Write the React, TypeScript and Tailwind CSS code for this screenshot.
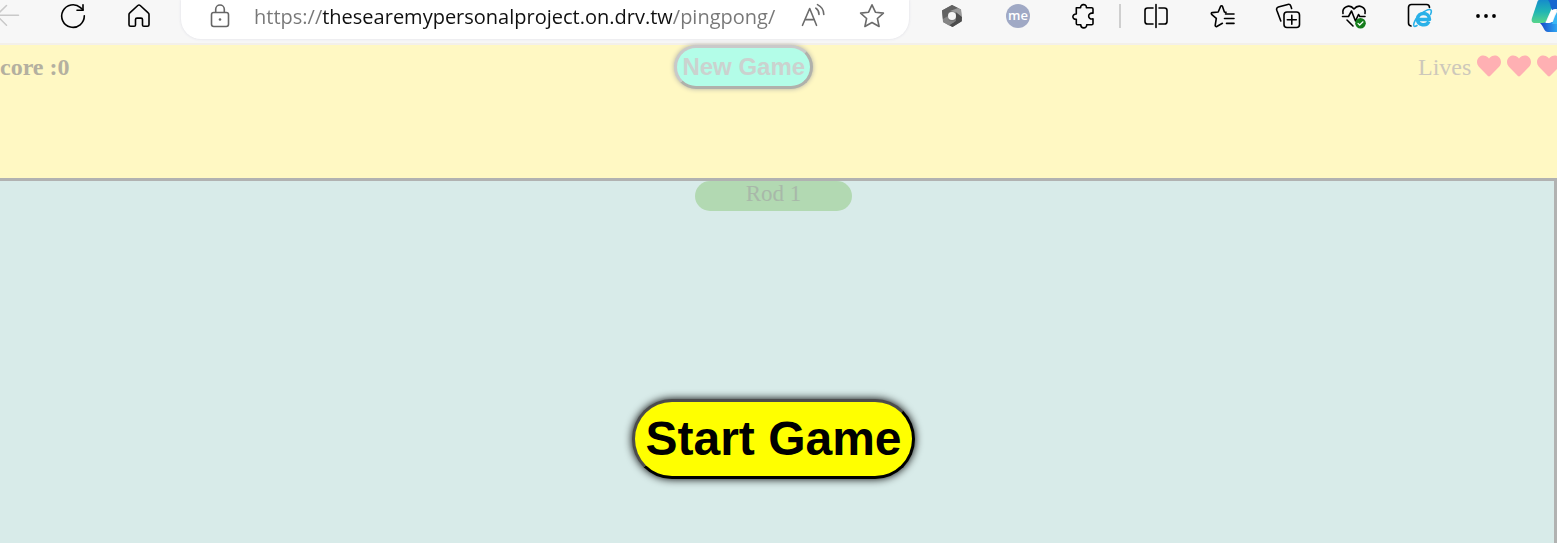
import React from "react";

type IconProps = { children: React.ReactNode; className?: string };

function Icon({ children, className = "text-black" }: IconProps) {
  return (
    <svg
      viewBox="0 0 26 26"
      width="26"
      height="26"
      fill="none"
      stroke="currentColor"
      strokeWidth="1.6"
      strokeLinecap="round"
      strokeLinejoin="round"
      className={`shrink-0 ${className}`}
      aria-hidden="true"
    >
      {children}
    </svg>
  );
}

function ToolButton({ label, children }: { label: string; children: React.ReactNode }) {
  return (
    <button type="button" aria-label={label} className="flex h-8 w-[66px] shrink-0 items-center justify-center">
      {children}
    </button>
  );
}

function Heart() {
  return (
    <svg viewBox="0 0 512 512" width="24" height="24" className="mt-px shrink-0 text-[#ffb0b3]" fill="currentColor" aria-hidden="true">
      <path d="M462.3 62.6C407.5 15.9 326 24.3 275.7 76.2L256 96.5l-19.7-20.3C186.1 24.3 104.500 15.900 49.700 62.600c-62.800 53.600-66.100 149.800-9.900 207.900l193.500 199.800c12.500 12.900 32.800 12.900 45.300 0l193.500-199.800c56.300-58.100 53-154.300-9.800-207.900z" />
    </svg>
  );
}

function BrowserBar() {
  return (
    <header className="flex h-[45px] shrink-0 items-start overflow-hidden border-b-2 border-[#f3f0ea] bg-[#f7f7f7]">
      <button type="button" aria-label="Back" className="flex h-8 w-10 shrink-0 items-center">
        <svg viewBox="0 0 20 26" width="20" height="26" fill="none" stroke="#c9c9c9" strokeWidth="1.5" strokeLinecap="round" aria-hidden="true">
          <path d="M18.500 12.300H-4M6.500 2.500-3.500 12.300l10 10" />
        </svg>
      </button>
      <ToolButton label="Refresh">
        <Icon>
          <path d="M24.300 12.800A11.300 11.300 0 1 1 20.500 4.600L23 7" />
          <path d="M23 1.700V7.300H17" />
        </Icon>
      </ToolButton>
      <ToolButton label="Home">
        <Icon>
          <path d="M3 11.500c0-.7.300-1.300.8-1.700l8-7.300c.7-.6 1.700-.6 2.400 0l8 7.300c.5.400.8 1 .8 1.700v10.200c0 .9-.7 1.600-1.600 1.600h-3.600c-.8 0-1.300-.6-1.300-1.300v-5.400c0-.8-.7-1.500-1.500-1.500h-4c-.8 0-1.500.7-1.500 1.500V22c0 .7-.5 1.300-1.300 1.300H4.600c-.9 0-1.600-.7-1.600-1.600z" />
        </Icon>
      </ToolButton>

      <div className="ml-[9px] mr-2.5 flex h-[39px] min-w-0 flex-1 items-start rounded-b-[20px] bg-white shadow-[0_0_3px_#dcdce4]">
        <button type="button" aria-label="Site information" className="flex h-8 w-[73px] shrink-0 items-center justify-center pl-1">
          <Icon className="text-[#666666]">
            <rect x="4.500" y="9.500" width="17" height="14" rx="2.200" />
            <path d="M8.700 9.300V6.300a4.300 4.300 0 0 1 8.600 0v3" />
            <circle cx="13" cy="16.500" r="1.300" fill="currentColor" stroke="none" />
          </Icon>
        </button>
        <input
          type="text"
          aria-label="Address"
          defaultValue="https://thesearemypersonalproject.on.drv.tw/pingpong/"
          className="h-8 min-w-0 flex-1 bg-[linear-gradient(90deg,#777777_68px,#101010_68px,#101010_418px,#777777_418px)] bg-clip-text font-['Open_Sans',sans-serif] text-xl text-transparent outline-none"
        />
        <button type="button" aria-label="Read aloud" className="flex h-8 w-[60px] shrink-0 items-center justify-center">
          <Icon className="text-[#6b6b6b]">
            <path d="M2.500 22.300 9.700 5.500l6.800 16.800M5 16.600h9.300" />
            <path d="M15.800 5.200a7.500 7.500 0 0 1 3.200 6.200M17.500 1.600c4 2 6.300 5.800 6.300 9.800" />
          </Icon>
        </button>
        <button type="button" aria-label="Add to favorites" className="mr-2 flex h-8 w-[58px] shrink-0 items-center justify-center">
          <Icon className="text-[#6b6b6b]">
            <path d="m13 1.800 3.400 7.400 8 .9-6 5.400 1.700 8-7.100-4-7.100 4 1.700-8-6-5.400 8-.9z" />
          </Icon>
        </button>
      </div>

      <ToolButton label="Hexagon extension">
        <svg viewBox="0 0 22 24" width="22" height="24" aria-hidden="true">
          <path d="M11 1 20 5.500 21 17l-9.500 6L2 18 1 6.500z" fill="#777" />
          <path d="M11 1 1 6.500l1 9L7.500 13V8.500L18 4.500z" fill="#626262" />
          <path d="m11 1 9 4.500.700 7.500-5-4.500L9 7l8-3z" fill="#999" />
          <path d="m21 13-.5 4.500-9 5.500L8 21l7-4V8.500z" fill="#4c4c4c" />
          <path d="m2 15 5-3 1 5 6 .5-6 4L2 18z" fill="#858585" />
          <circle cx="11" cy="12" r="4" fill="#f4f4f4" />
        </svg>
      </ToolButton>
      <ToolButton label="Me extension">
        <span className="flex size-6 items-center justify-center rounded-full bg-[#a0a9c5] pb-0.5 font-['Open_Sans',sans-serif] text-[13px] leading-none font-semibold text-white">
          me
        </span>
      </ToolButton>
      <ToolButton label="Extensions">
        <Icon>
          <path d="M5.300 4.800h4.300c-.4-3.800 5.800-4.500 5.800-.5v.5h5.300c.8 0 1.300.5 1.300 1.300v4.200c-5.800-1.300-5.800 6.700 0 5.600v4.600c0 .8-.5 1.300-1.300 1.300h-5v.7c-.5 3.300-5.700 3.200-5.900-.4v-.3H6.600c-.8 0-1.300-.5-1.300-1.300v-4.300C.8 16.700.7 10.800 5.300 11z" />
        </Icon>
      </ToolButton>
      <span className="mx-0.5 mt-1 h-6 w-0.5 shrink-0 bg-[#cfcfcf]" />
      <ToolButton label="Split screen">
        <Icon>
          <path d="M13 1.500v23M10 5H4.500C3.100 5 2 6 2 7.400v11C2 19.900 3.100 21 4.500 21H10M16 5h5.500c1.400 0 2.500 1 2.500 2.400v11c0 1.500-1.100 2.600-2.500 2.600H16" />
        </Icon>
      </ToolButton>
      <ToolButton label="Favorites">
        <Icon>
          <path d="M17 9.400 15.400 9 13.500 3.400c-.4-.9-1.500-.9-1.900 0L9.200 9l-6 .6c-.9.100-1.200 1.100-.6 1.700l4.700 4.100-1.100 7c-.1.900.8 1.500 1.600 1.100l5.600-3.200M16.500 11h8.500M15.500 15.500h9.500M17.500 20.400h7.500" />
        </Icon>
      </ToolButton>
      <ToolButton label="Collections">
        <Icon>
          <rect x="9" y="9" width="15.500" height="15.500" rx="3" />
          <path d="M16.800 12.300v9M12.300 16.800h9M5.800 18 1.800 7.200C1.300 5.700 2 4.400 3.300 3.900l9.500-2.500c1.400-.4 2.500.3 3 1.600L16.600 5.500" />
        </Icon>
      </ToolButton>
      <ToolButton label="Browser essentials">
        <Icon>
          <path d="M2 10.500C.7 3.500 8.700.7 13 6c4.300-5.300 12.300-2.500 11 4.500M1.500 13.500h6l3-5.500 4 10 3-6.500 1.300 2H24M6 17l6 6" />
          <circle cx="19.500" cy="20.300" r="5.300" fill="#147c1b" stroke="none" />
          <path d="m17 20.300 1.700 1.700 3.300-3.200" stroke="white" strokeWidth="1.200" />
        </Icon>
      </ToolButton>
      <ToolButton label="Internet Explorer mode">
        <Icon>
          <path d="M4 23c-1.700-.3-2.500-1.300-2.500-3V4.500c0-2 1-3 3-3h15c2 0 3 1 3 3" />
          <path d="M21.800 18.700c-2 4.800-11.300 4-11.300-2.700 0-7.500 12-7.500 12 .5H10.800" stroke="#2ab1e8" strokeWidth="3.500" strokeLinecap="butt" />
          <path d="M10 22.500c-6 4-3.500-6 4-11.500 7.500-6 12.500-6 9.500.5" stroke="#2ab1e8" strokeWidth="1.600" />
        </Icon>
      </ToolButton>
      <ToolButton label="Settings and more">
        <Icon>
          <g fill="currentColor" stroke="none">
            <circle cx="5" cy="13" r="1.900" />
            <circle cx="13" cy="13" r="1.900" />
            <circle cx="21" cy="13" r="1.900" />
          </g>
        </Icon>
      </ToolButton>
      <button type="button" aria-label="Copilot" className="h-8 w-[38px] shrink-0 overflow-hidden pl-3">
        <svg viewBox="0 0 26 32" width="26" height="32" aria-hidden="true">
          <defs>
            <linearGradient id="teal" x1="0" y1="0" x2="0" y2="1">
              <stop offset="0" stopColor="#168ccb" />
              <stop offset="0.500" stopColor="#20b5b4" />
              <stop offset="1" stopColor="#58d58b" />
            </linearGradient>
            <linearGradient id="blue" x1="0" y1="0" x2="1" y2="0">
              <stop offset="0" stopColor="#1746c7" />
              <stop offset="1" stopColor="#2fa6f2" />
            </linearGradient>
          </defs>
          <path d="M9 22h17v10H17c-4 0-4-5-8-9z" fill="url(#blue)" />
          <path d="M8 0h16l-4 10-4 9c-1 3-2 4-5 4H4c-3 0-4-2-3-5L6 3c.6-2 1-3 2-3z" fill="url(#teal)" />
          <path d="M17 0h9v10l-4 1c-3-2-2-8-5-11z" fill="#1767cf" />
          <path d="M26 9c-4-.5-6 1.500-7 5l-2 5c-1 2-2 4-4 4h5c2 0 3-1 4-4l3-8c.3-.8.600-1.200 1-1.500z" fill="white" />
          <path d="M26 12v12h-5l3-8z" fill="#39b6f4" />
        </svg>
      </button>
    </header>
  );
}

export default function App() {
  return (
    <div className="flex min-h-screen flex-col overflow-hidden bg-[#fff8c3] font-['Liberation_Serif',serif] text-2xl">
      <BrowserBar />
      <section className="flex h-[133px] shrink-0 items-start justify-between">
        <p className="pt-2 leading-7 font-bold text-[#b4b0a0]">core :0</p>
        <button
          type="button"
          className="rounded-full border-[3px] border-t-[#c9c9c9] border-r-[#b0b1ab] border-b-[#b0b1ab] border-l-[#c9c9c9] bg-[#b3fde8] p-[5px] font-['Liberation_Sans',sans-serif] leading-7 font-bold text-[#cbd2cf] shadow-[0_0_5px_#b1b1a8]"
        >
          New Game
        </button>
        <div className="flex w-[139px] gap-1.5 overflow-hidden pt-2 leading-7 text-[#cdc8bb]">
          <span>Lives</span>
          <Heart />
          <Heart />
          <Heart />
        </div>
      </section>
      <main className="flex flex-1 flex-col items-center border-t-[3px] border-r-[3px] border-[#b1b2b1] bg-[#d8ebe9] pr-[7px]">
        <div className="h-[30px] w-[157px] rounded-full bg-[#b2d9b2] text-center text-[23px] leading-[25px] text-[#a8b8a9]">Rod 1</div>
        <button
          type="button"
          className="mt-[188px] rounded-full border-[3px] border-t-[#4c4c4c] border-r-black border-b-black border-l-[#4c4c4c] bg-[#ffff00] p-2.5 font-['Liberation_Sans',sans-serif] text-5xl leading-[54px] font-bold text-black shadow-[0_0_8px_black]"
        >
          Start Game
        </button>
      </main>
    </div>
  );
}
